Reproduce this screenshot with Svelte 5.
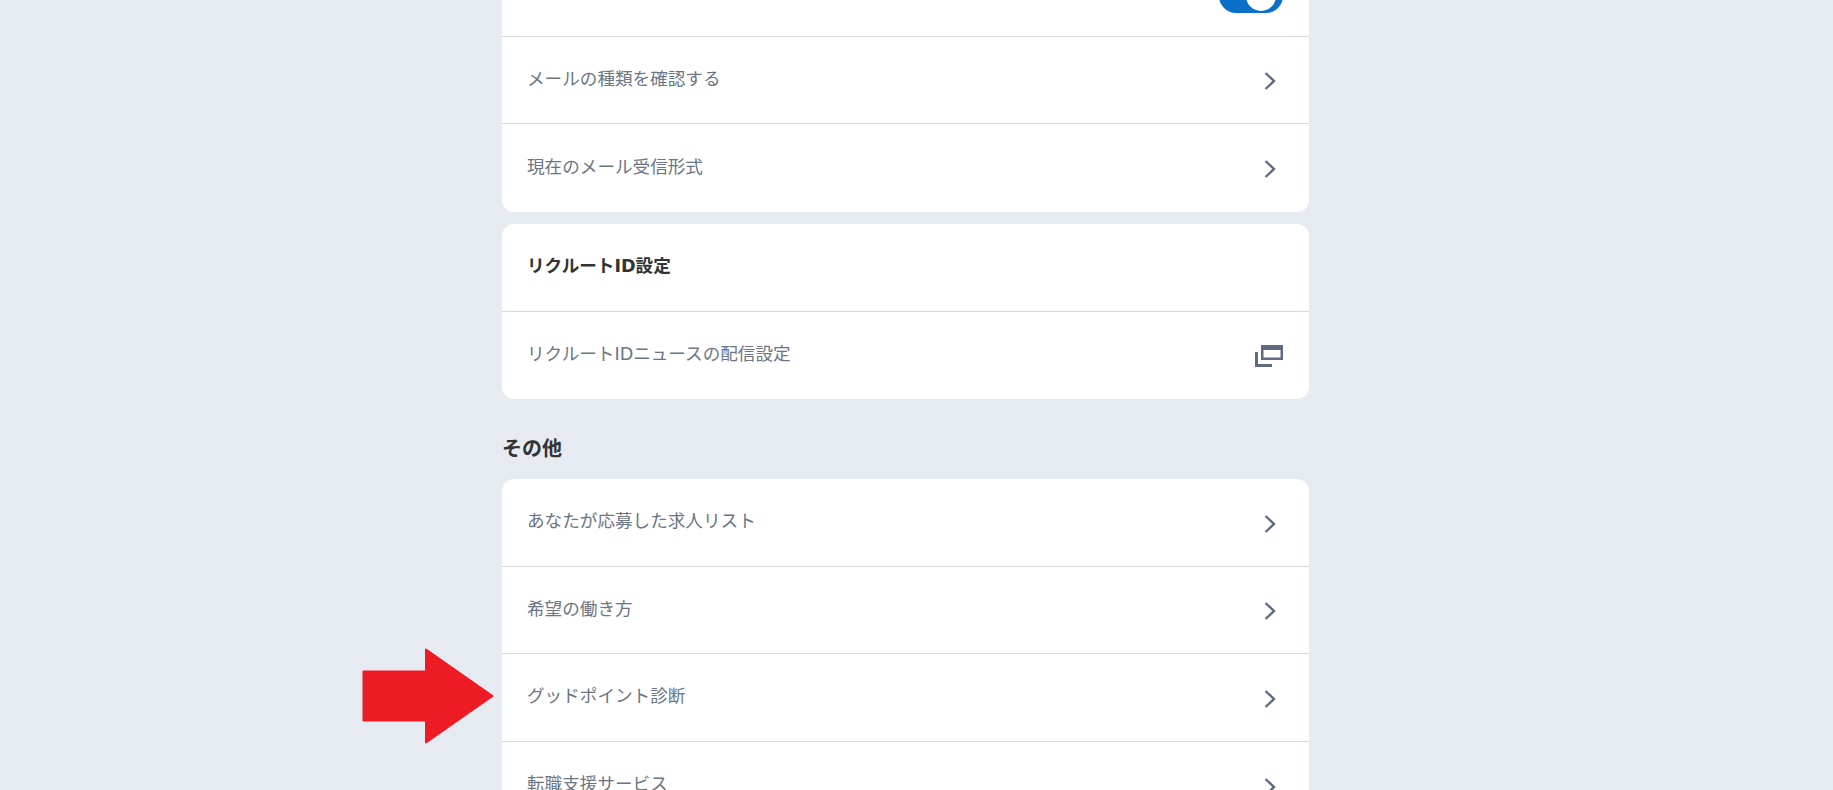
<script>
	const topRows = ['メールの種類を確認する', '現在のメール受信形式'];
	const otherRows = ['あなたが応募した求人リスト', '希望の働き方', 'グッドポイント診断', '転職支援サービス'];
</script>

<div class="page">
	<main class="column">
		<section class="card">
			<div class="row row-cut">
				<span class="toggle"></span>
			</div>
			{#each topRows as label}
				<div class="row">
					<span>{label}</span>
					<svg class="chevron" viewBox="0 0 12 20"><path d="M1.5 2 L10 10 L1.5 18" /></svg>
				</div>
			{/each}
		</section>

		<section class="card second">
			<div class="row title">リクルートID設定</div>
			<div class="row">
				<span>リクルートIDニュースの配信設定</span>
				<svg class="window" viewBox="0 0 28 22">
					<path d="M6 0 H28 V15 H6 Z M8.5 5 V12.5 H25.5 V5 Z" fill-rule="evenodd" />
					<path d="M0 7 H3 V19 H17 V22 H0 Z" />
				</svg>
			</div>
		</section>

		<h2>その他</h2>

		<section class="card">
			{#each otherRows as label}
				<div class="row">
					<span>{label}</span>
					<svg class="chevron" viewBox="0 0 12 20"><path d="M1.5 2 L10 10 L1.5 18" /></svg>
				</div>
			{/each}
		</section>
	</main>

	<svg class="arrow" viewBox="0 0 132 96">
		<path d="M1.5 23.5 H64 V1.5 L130.5 48 L64 94.5 V72.5 H1.5 Z" />
	</svg>
</div>

<style>
	:global(body) {
		margin: 0;
		background: #e6ebf2;
	}
	.page {
		position: relative;
		height: 790px;
		overflow: hidden;
		background: #e6ebf2;
		font-family: "DejaVu Sans", "Noto Sans CJK JP", sans-serif;
		font-size: 17.6px;
		color: #6b7585;
	}
	.column {
		width: 807px;
		margin: -40px 0 0 502px;
	}
	.card {
		background: #fff;
		border-radius: 12px;
		overflow: hidden;
	}
	.second {
		margin-top: 12.5px;
	}
	.row {
		display: flex;
		align-items: center;
		justify-content: space-between;
		box-sizing: border-box;
		height: 87.5px;
		padding: 0 25px 6px;
		border-bottom: 1px solid #d5d8dc;
	}
	.row:last-child {
		border-bottom: none;
	}
	.row-cut {
		height: 76.9px;
		align-items: flex-end;
		justify-content: flex-end;
		padding: 0 26px 23px 0;
	}
	.toggle {
		position: relative;
		display: block;
		width: 64px;
		height: 34px;
		border-radius: 17px;
		background: #0a6fc9;
	}
	.toggle::after {
		content: "";
		position: absolute;
		right: 7px;
		top: 2px;
		width: 30px;
		height: 30px;
		border-radius: 50%;
		background: #fff;
	}
	.title {
		color: #333;
		font-weight: 700;
		padding-bottom: 7px;
	}
	.chevron {
		width: 12px;
		height: 20px;
		margin: 8px 8px 0 0;
		fill: none;
		stroke: #5f6b80;
		stroke-width: 2.4;
	}
	.window {
		width: 28px;
		height: 22px;
		margin: 6px 1px 0 0;
		fill: #5f6b80;
	}
	h2 {
		margin: 35px 0 15px;
		font-size: 20px;
		line-height: 30px;
		font-weight: 700;
		color: #333;
	}
	.arrow {
		position: absolute;
		left: 362px;
		top: 648px;
		width: 132px;
		height: 96px;
		fill: #ed1c24;
		stroke: #ed1c24;
		stroke-width: 2;
		stroke-linejoin: round;
	}
</style>
